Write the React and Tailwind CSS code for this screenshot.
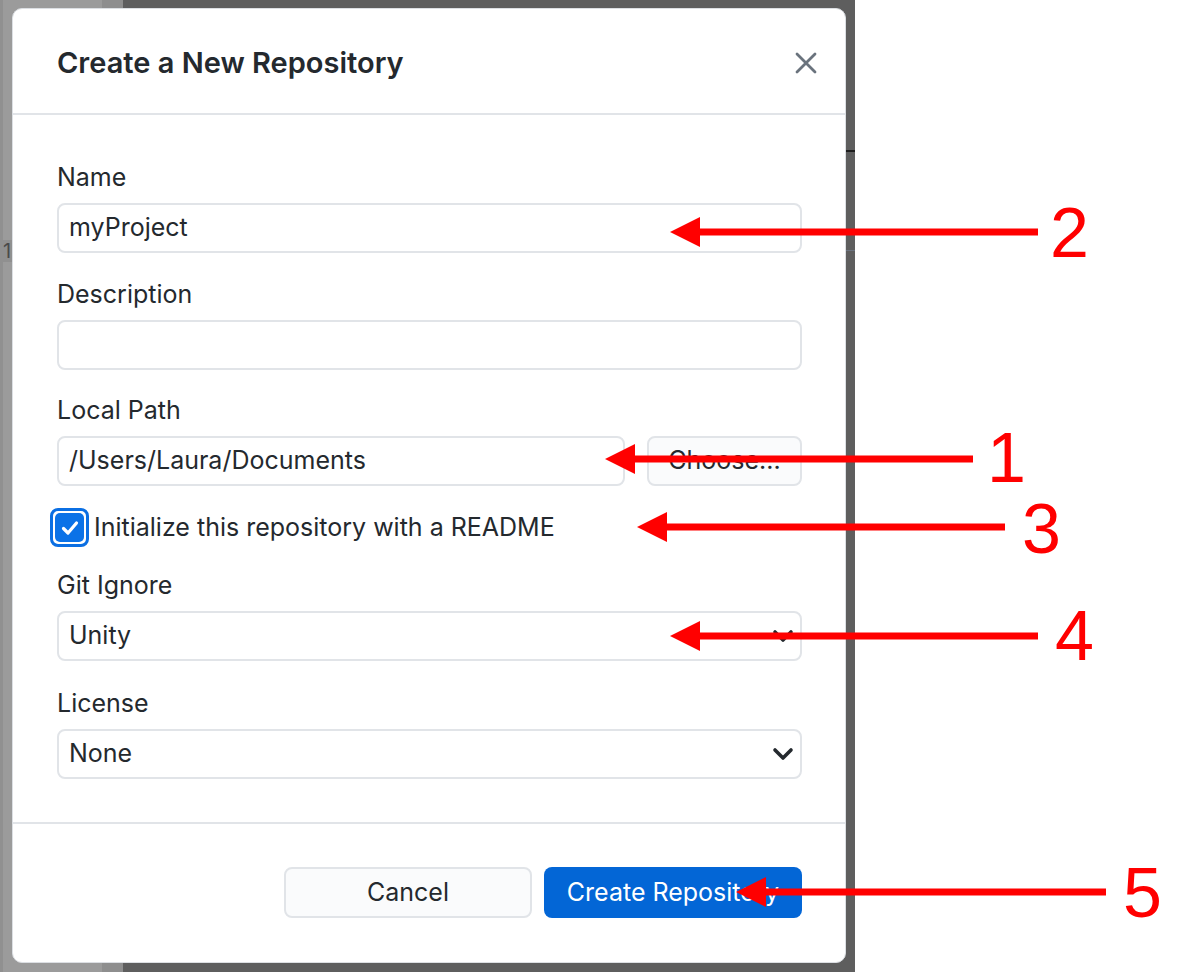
import React from "react";

const fieldLabel = "block h-[28px] leading-[28px] text-[25px] text-[#24292e] mb-[12px]";
const inputBox =
  "h-[50px] w-full rounded-[8px] border-2 border-[#e1e4e8] bg-white px-[10px] flex items-center text-[25px] text-[#24292e]";

function Chevron() {
  return (
    <svg width="22" height="14" viewBox="0 0 22 14" className="shrink-0">
      <path d="M3 3 L11 11 L19 3" fill="none" stroke="#24292e" strokeWidth="3.6" strokeLinecap="round" strokeLinejoin="round" />
    </svg>
  );
}

function SelectBox({ value }) {
  return (
    <div className={`${inputBox} justify-between pr-[6px]`}>
      <span>{value}</span>
      <Chevron />
    </div>
  );
}

// red call-outs drawn on top of the screenshot
const callouts = [
  { n: "1", tip: 605, y: 459, end: 973, tx: 987, ty: 482 },
  { n: "2", tip: 670, y: 232, end: 1038, tx: 1050, ty: 257 },
  { n: "3", tip: 637, y: 527, end: 1005, tx: 1022, ty: 553 },
  { n: "4", tip: 670, y: 636, end: 1038, tx: 1055, ty: 660 },
  { n: "5", tip: 736, y: 892, end: 1106, tx: 1123, ty: 917 },
];

function Callouts() {
  return (
    <svg width="1197" height="972" className="absolute left-0 top-0 pointer-events-none">
      {callouts.map((c) => (
        <g key={c.n}>
          <line x1={c.tip + 26} y1={c.y} x2={c.end} y2={c.y} stroke="#ff0000" strokeWidth="7" />
          <polygon points={`${c.tip},${c.y} ${c.tip + 30},${c.y - 15} ${c.tip + 30},${c.y + 15}`} fill="#ff0000" />
          <text x={c.tx} y={c.ty} fill="#ff0000" fontSize="70" fontFamily="'Liberation Sans', Arial, sans-serif">
            {c.n}
          </text>
        </g>
      ))}
    </svg>
  );
}

function Dialog() {
  return (
    <div className="absolute left-[12px] top-[8px] w-[834px] rounded-[10px] bg-white border border-[#dcdfe3] overflow-hidden">
      {/* header */}
      <div className="h-[106px] border-b-2 border-[#e1e4e8] flex items-center justify-between pl-[44px] pr-[28px] pt-[4px]">
        <h1 className="text-[29px] font-semibold text-[#24292e]">Create a New Repository</h1>
        <svg width="22" height="22" viewBox="0 0 22 22">
          <path d="M2 2 L20 20 M20 2 L2 20" stroke="#6a737d" strokeWidth="2.8" strokeLinecap="round" />
        </svg>
      </div>

      {/* body */}
      <div className="pt-[48px] pb-[43px] pl-[44px] pr-[43px]">
        <label className={fieldLabel}>Name</label>
        <div className={inputBox}>myProject</div>

        <label className={`${fieldLabel} mt-[27px]`}>Description</label>
        <div className={inputBox}></div>

        <label className={`${fieldLabel} mt-[26px]`}>Local Path</label>
        <div className="flex gap-[22px]">
          <div className={`${inputBox} flex-1`}>/Users/Laura/Documents</div>
          <button className="h-[50px] w-[155px] shrink-0 rounded-[8px] border-2 border-[#e1e4e8] bg-[#fafbfc] text-[25px] text-[#24292e]">
            Choose...
          </button>
        </div>

        <div className="mt-[22px] ml-[-7px] flex items-center gap-[5px] h-[39px]">
          <span className="w-[39px] h-[39px] rounded-[8px] border-[3px] border-[#0b6fe3] p-[2px] flex">
            <span className="flex-1 rounded-[5px] bg-[#0b72e7] flex items-center justify-center">
              <svg width="22" height="22" viewBox="0 0 22 22">
                <path d="M4.5 11.5 L9 16 L17.5 6" fill="none" stroke="white" strokeWidth="3.2" strokeLinecap="round" strokeLinejoin="round" />
              </svg>
            </span>
          </span>
          <span className="text-[25px] text-[#24292e]">Initialize this repository with a README</span>
        </div>

        <label className={`${fieldLabel} mt-[24px]`}>Git Ignore</label>
        <SelectBox value="Unity" />

        <label className={`${fieldLabel} mt-[28px]`}>License</label>
        <SelectBox value="None" />
      </div>

      {/* footer */}
      <div className="border-t-2 border-[#e1e4e8] pt-[43px] pb-[44px] pr-[43px] flex justify-end gap-[12px]">
        <button className="h-[51px] w-[248px] rounded-[8px] border-2 border-[#e1e4e8] bg-[#fafbfc] text-[25px] text-[#24292e]">
          Cancel
        </button>
        <button className="h-[51px] w-[258px] rounded-[8px] bg-[#0366d6] text-[25px] text-white">
          Create Repository
        </button>
      </div>
    </div>
  );
}

export default function App() {
  return (
    <div className="relative w-[1197px] h-[972px] overflow-hidden bg-white font-['Inter','Noto_Sans',sans-serif]">
      {/* dimmed app behind the dialog */}
      <div className="relative w-[855px] h-full flex">
        <div className="w-[102px] bg-[#9b9b9b] border-l-[3px] border-[#909090]">
          <div className="mt-[240px] h-[22px] w-[9px] bg-[#909090] text-[20px] leading-[22px] text-[#4a4a4a] overflow-hidden">1</div>
        </div>
        <div className="w-[21px] bg-[#8e8e8e]"></div>
        <div className="flex-1 bg-[#5e5e5e] flex flex-col items-end">
          <div className="mt-[150px] h-[2px] w-[10px] bg-[#1e1e1e]"></div>
          <div className="mt-[98px] h-[1px] w-[10px] bg-[#6c7480]"></div>
        </div>
        <Dialog />
      </div>
      <Callouts />
    </div>
  );
}
